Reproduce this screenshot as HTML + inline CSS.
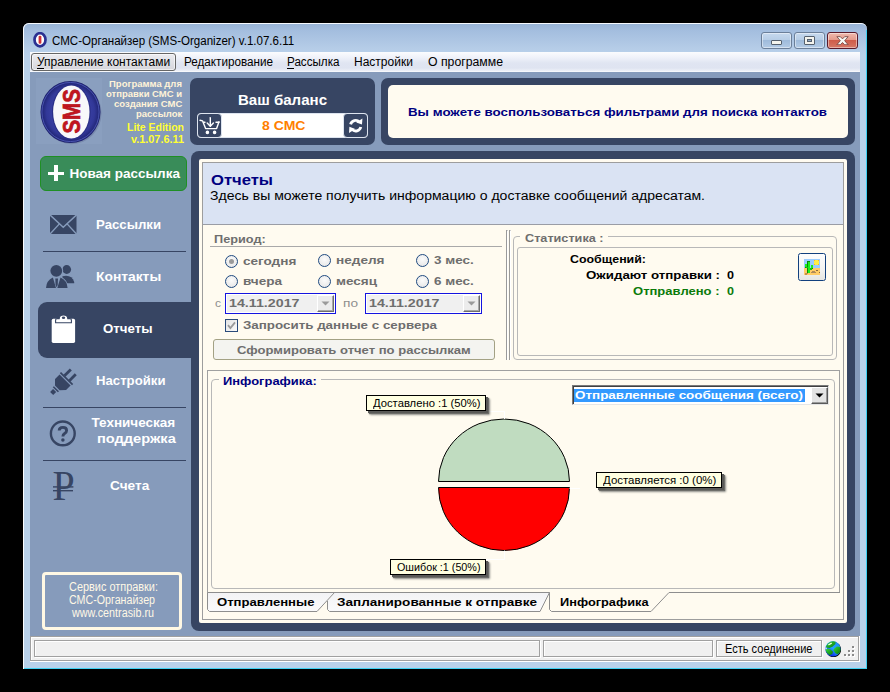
<!DOCTYPE html>
<html><head><meta charset="utf-8"><title>SMS-Organizer</title>
<style>
html,body{margin:0;padding:0;}
body{width:890px;height:692px;background:#000;position:relative;overflow:hidden;font-family:"Liberation Sans",sans-serif;}
body div,body svg{position:absolute;box-sizing:border-box;}
.t{position:absolute;white-space:nowrap;line-height:1;transform-origin:0 0;display:block;}
</style></head><body>
<div style="left:23px;top:23px;width:844px;height:646px;border-radius:6px 6px 0 0;background:linear-gradient(#97b3d5 0px,#a4bedf 8px,#b6cde8 26px,#b9d1ea 32px,#b9d1ea 100%);"></div>
<div style="left:866px;top:30px;width:1px;height:639px;background:#3fd0f2;"></div>
<div style="left:23px;top:668px;width:844px;height:1px;background:#3fd0f2;"></div>
<div style="left:23px;top:23px;width:844px;height:646px;border-radius:6px 6px 0 0;border-top:1px solid #f6f9fd;border-left:1px solid #fbfdff;background:none;"></div>
<svg style="left:33px;top:32px" width="14" height="15.5" viewBox="0 0 14 16" preserveAspectRatio="none"><ellipse cx="7" cy="8" rx="5.5" ry="6.8" fill="#fff" stroke="#2b3192" stroke-width="2.7"/><rect x="5.6" y="3.8" width="2.8" height="8.4" rx="1.2" fill="#d03038"/></svg>
<span class="t" style="left:52.30px;top:34px;line-height:14px;font-size:12px;color:#000;transform:scaleX(0.9624);">СМС-Органайзер (SMS-Organizer) v.1.07.6.11</span>
<div style="left:761px;top:32px;width:31px;height:17px;border:1px solid #6b7f99;border-radius:3px;background:linear-gradient(#c6d9ee 0%,#b7cde6 45%,#9fbbdb 50%,#b3cbe6 100%);box-shadow:inset 0 0 0 1px rgba(255,255,255,.45);"></div>
<div style="left:794px;top:32px;width:31px;height:17px;border:1px solid #6b7f99;border-radius:3px;background:linear-gradient(#c6d9ee 0%,#b7cde6 45%,#9fbbdb 50%,#b3cbe6 100%);box-shadow:inset 0 0 0 1px rgba(255,255,255,.45);"></div>
<div style="left:827px;top:32px;width:31px;height:17px;border:1px solid #5a1a2a;border-radius:3px;background:linear-gradient(#f0b9ad 0%,#e49b8c 45%,#cf5c4a 50%,#d67866 100%);box-shadow:inset 0 0 0 1px rgba(255,255,255,.45);"></div>
<div style="left:771px;top:40px;width:11px;height:5px;background:#f4f4ee;border:1px solid #55606e;border-radius:1px;"></div>
<div style="left:804px;top:36px;width:11px;height:9px;background:#f4f4ee;border:1px solid #55606e;border-radius:1px;"></div>
<div style="left:807px;top:39px;width:5px;height:3px;background:#8fa9c8;border:1px solid #55606e;"></div>
<svg style="left:836px;top:36px" width="13" height="9.4" viewBox="0 0 15 11" preserveAspectRatio="none"><path d="M1 0.8 L5 0.8 L7.5 3.4 L10 0.8 L14 0.8 L10 5.5 L14 10.2 L10 10.2 L7.5 7.6 L5 10.2 L1 10.2 L5 5.5 Z" fill="#f8f8f4" stroke="#6a3a38" stroke-width="0.9" stroke-linejoin="round"/></svg>
<div style="left:30px;top:52px;width:830px;height:20px;background:linear-gradient(#fbfcfe 0%,#eef1f9 30%,#e0e5f2 55%,#dfe4f1 80%,#eef1f8 95%,#ffffff 100%);"></div>
<div style="left:31px;top:53px;width:145px;height:18px;border:1px solid #666;border-radius:3px;background:linear-gradient(#ececf0,#d6d6dc);box-shadow:inset 0 0 0 1px rgba(255,255,255,.6);"></div>
<span class="t" style="left:37.00px;top:55px;line-height:14px;font-size:12px;color:#000;">Управление контактами</span>
<div style="left:37px;top:68px;width:7px;height:1px;background:#000;"></div>
<span class="t" style="left:184.00px;top:55px;line-height:14px;font-size:12px;color:#000;transform:scaleX(0.9736);">Редактирование</span>
<span class="t" style="left:287.00px;top:55px;line-height:14px;font-size:12px;color:#000;transform:scaleX(0.9705);">Рассылка</span>
<div style="left:287px;top:68px;width:7px;height:1px;background:#000;"></div>
<span class="t" style="left:354.00px;top:55px;line-height:14px;font-size:12px;color:#000;">Настройки</span>
<span class="t" style="left:428.00px;top:55px;line-height:14px;font-size:12px;color:#000;transform:scaleX(1.0216);">О программе</span>
<div style="left:30px;top:72px;width:830px;height:565px;background:#869bbb;"></div>
<div style="left:36px;top:78px;width:66px;height:66px;background:#8a9fbf;"></div>
<svg style="left:36px;top:78px" width="67" height="67" viewBox="0 0 67 67">
<defs><radialGradient id="lg" cx="50%" cy="50%" r="50%"><stop offset="0.5" stop-color="#3c43a8"/><stop offset="0.8" stop-color="#323898"/><stop offset="1" stop-color="#1c206c"/></radialGradient></defs>
<ellipse cx="35.6" cy="35.2" rx="30" ry="31" fill="#6c7ca0" opacity=".6"/>
<ellipse cx="34.5" cy="34" rx="30" ry="31" fill="url(#lg)"/>
<ellipse cx="34.5" cy="34" rx="28.6" ry="29.6" fill="none" stroke="#5a66c8" stroke-width="1" opacity=".7"/>
<ellipse cx="35.3" cy="34" rx="19.4" ry="27.6" fill="#2a2f86"/>
<ellipse cx="35.3" cy="34" rx="18.2" ry="26.5" fill="#f8f8fa"/>
<text x="0" y="0" transform="translate(43.8,55.6) rotate(-90)" font-family="Liberation Sans" font-weight="bold" font-size="23.5" fill="#c4151f" stroke="#b01019" stroke-width="0.7" textLength="44.5" lengthAdjust="spacingAndGlyphs">SMS</text>
</svg>
<span class="t" style="left:109.47px;top:80px;line-height:9px;font-size:8.2px;color:#fff3d8;font-weight:bold;transform:scaleX(1.1600);">Программа для</span>
<span class="t" style="left:106.30px;top:90px;line-height:9px;font-size:8.2px;color:#fff3d8;font-weight:bold;transform:scaleX(1.1600);">отправки СМС и</span>
<span class="t" style="left:114.15px;top:100px;line-height:9px;font-size:8.2px;color:#fff3d8;font-weight:bold;transform:scaleX(1.1600);">создания СМС</span>
<span class="t" style="left:136.21px;top:110px;line-height:9px;font-size:8.2px;color:#fff3d8;font-weight:bold;transform:scaleX(1.1600);">рассылок</span>
<span class="t" style="left:126.75px;top:122px;line-height:11px;font-size:10px;color:#ffff33;font-weight:bold;transform:scaleX(1.0470);">Lite Edition</span>
<span class="t" style="left:130.75px;top:134px;line-height:11px;font-size:10px;color:#ffff33;font-weight:bold;transform:scaleX(1.0872);">v.1.07.6.11</span>
<div style="left:190px;top:78px;width:185px;height:67px;background:#374563;border-radius:7px;"></div>
<span class="t" style="left:238.00px;top:92px;line-height:16px;font-size:14.5px;color:#fff;font-weight:bold;transform:scaleX(1.0377);">Ваш баланс</span>
<div style="left:197px;top:113px;width:171px;height:25px;background:#fff;border-radius:4px;border:1px solid #dde4ef;"></div>
<div style="left:197px;top:113px;width:25px;height:25px;background:#374563;border-radius:4px;border:1px solid #dde4ef;"></div>
<div style="left:343px;top:113px;width:25px;height:25px;background:#374563;border-radius:4px;border:1px solid #dde4ef;"></div>
<svg style="left:197px;top:113px" width="25" height="25" viewBox="0 0 25 25" fill="none" stroke="#fff" stroke-width="1.4" stroke-linecap="round" stroke-linejoin="round">
<path d="M3 7.3 L5.6 7.9 L8.6 15.6 L19.6 15.6 L22 8.8"/><path d="M6.6 9.2 L8 9.2 M19 9.2 L22 9.2"/>
<path d="M13.3 4.6 L13.3 13"/><path d="M10.2 10 L13.3 13.2 L16.4 10"/>
<circle cx="10.4" cy="19.4" r="1.1" fill="#fff"/><circle cx="17.6" cy="19.4" r="1.1" fill="#fff"/></svg>
<svg style="left:343px;top:113px" width="25" height="25" viewBox="0 0 25 25" fill="none" stroke="#fff" stroke-width="2.8">
<path d="M7.6 11.4 A5.2 5.2 0 0 1 16.4 9"/><path d="M17.8 14 A5.2 5.2 0 0 1 9 16.4"/>
<path d="M19.4 5.4 L19 11.6 L13.2 9.4 Z" fill="#fff" stroke="none"/><path d="M6 20 L6.4 13.8 L12.2 16 Z" fill="#fff" stroke="none"/></svg>
<span class="t" style="left:261.50px;top:118px;line-height:15px;font-size:13px;color:#ff8000;font-weight:bold;transform:scaleX(1.0800);">8 СМС</span>
<div style="left:381px;top:78px;width:474px;height:67px;background:#374563;border-radius:7px;"></div>
<div style="left:388px;top:85px;width:460px;height:53px;background:#fffbf0;border-radius:5px;"></div>
<span class="t" style="left:408.00px;top:106px;line-height:12px;font-size:11.5px;color:#000080;font-weight:bold;transform:scaleX(1.1588);">Вы можете воспользоваться фильтрами для поиска контактов</span>
<div style="left:40px;top:156px;width:147px;height:35px;background:#398c59;border:1px solid #1f8f24;border-radius:6px;"></div>
<div style="left:48px;top:171.5px;width:16px;height:3.5px;background:#fff;"></div>
<div style="left:54.3px;top:165px;width:3.5px;height:16.3px;background:#fff;"></div>
<span class="t" style="left:69.50px;top:166px;line-height:15px;font-size:13.5px;color:#fff;font-weight:bold;">Новая рассылка</span>
<svg style="left:50px;top:215px" width="26.5" height="19" viewBox="0 0 26.5 19"><rect x="0" y="0" width="26.5" height="19" fill="#374563"/>
<path d="M-0.5 -0.5 L13.25 12.2 L27 -0.5" fill="none" stroke="#869bbb" stroke-width="1.5"/><path d="M-0.5 19.6 L9.6 8.6 M27 19.6 L16.9 8.6" fill="none" stroke="#869bbb" stroke-width="1.4"/></svg>
<span class="t" style="left:96.00px;top:217px;line-height:15px;font-size:13.5px;color:#fff;font-weight:bold;transform:scaleX(0.9773);">Рассылки</span>
<div style="left:43px;top:251px;width:143px;height:1px;background:#374563;"></div>
<svg style="left:45px;top:264px" width="30" height="25" viewBox="0 0 30 25" fill="#374563">
<circle cx="21.7" cy="5.5" r="4.4"/><path d="M17.4 12.2 Q26.6 10 29.2 18 L29.2 19.3 L18 19.3 Z"/>
<circle cx="11.3" cy="6.8" r="6.9" fill="#869bbb"/><circle cx="11.3" cy="6.8" r="5.9"/>
<path d="M22.6 24.6 Q22.2 16.6 15.5 13.6 L12.3 24.6 Z" fill="#869bbb" stroke="#869bbb" stroke-width="2"/>
<path d="M1 24 Q1.4 16.6 7.9 13.6 L11 24 Z"/><path d="M22.6 24 Q22.2 16.6 15.5 13.6 L12.3 24 Z"/>
<path d="M10.3 14.4 L13 14.4 L12.7 21 L11.65 23.2 L10.6 21 Z"/></svg>
<span class="t" style="left:95.50px;top:269px;line-height:15px;font-size:13.5px;color:#fff;font-weight:bold;transform:scaleX(1.0242);">Контакты</span>
<div style="left:38px;top:302px;width:162px;height:56px;background:#374563;border-radius:9px 0 0 9px;"></div>
<svg style="left:51px;top:314px" width="25" height="30" viewBox="0 0 25 30">
<rect x="0.7" y="4.8" width="23.4" height="24.1" rx="1.6" fill="#fff"/>
<path d="M4.6 8.8 L4.6 6 Q4.6 4.6 6 4.6 L8.2 4.6 Q8.4 0.9 12.5 0.9 Q16.6 0.9 16.8 4.6 L19 4.6 Q20.4 4.6 20.4 6 L20.4 8.8 Z" fill="#fff" stroke="#374563" stroke-width="1.1"/>
<ellipse cx="12.5" cy="3.8" rx="1.7" ry="1.2" fill="#374563"/></svg>
<span class="t" style="left:103.00px;top:321px;line-height:15px;font-size:13.5px;color:#fff;font-weight:bold;transform:scaleX(0.9817);">Отчеты</span>
<svg style="left:45px;top:362px" width="36" height="36" viewBox="45 362 36 36" fill="#374563">
<g transform="translate(66.5 378.65) rotate(45)"><rect x="-4.9" y="-9.6" width="2.8" height="9"/><rect x="2.1" y="-9.6" width="2.8" height="9"/>
<rect x="-8.6" y="-0.9" width="17.2" height="1.7"/>
<path d="M-7.8 2 L7.8 2 L7.8 8.4 L3.3 13 L-3.3 13 L-7.8 8.4 Z"/>
<rect x="-3.6" y="14.2" width="7.2" height="1.6"/><rect x="-2.2" y="16.8" width="4.4" height="4.2"/></g></svg>
<span class="t" style="left:95.50px;top:373px;line-height:15px;font-size:13.5px;color:#fff;font-weight:bold;transform:scaleX(0.9758);">Настройки</span>
<div style="left:43px;top:407px;width:143px;height:1px;background:#374563;"></div>
<svg style="left:49px;top:420px" width="28" height="27" viewBox="0 0 28 27"><circle cx="13.8" cy="13.4" r="11.9" fill="none" stroke="#374563" stroke-width="2.4"/>
<path d="M10.2 10.6 Q10.2 7.4 13.9 7.4 Q17.6 7.4 17.6 10.4 Q17.6 12.2 15.6 13.4 Q13.9 14.4 13.9 16.6" fill="none" stroke="#374563" stroke-width="2.9"/><circle cx="13.9" cy="19.9" r="1.75" fill="#374563"/></svg>
<span class="t" style="left:91.50px;top:415px;line-height:15px;font-size:13.5px;color:#fff;font-weight:bold;">Техническая</span>
<span class="t" style="left:96.50px;top:431px;line-height:15px;font-size:13.5px;color:#fff;font-weight:bold;transform:scaleX(1.0828);">поддержка</span>
<div style="left:43px;top:460px;width:143px;height:1px;background:#374563;"></div>
<svg style="left:50px;top:466px" width="30" height="38" viewBox="0 0 30 38" fill="#374563">
<text x="2.4" y="34" font-family="Liberation Serif" font-size="42" textLength="22.2" lengthAdjust="spacingAndGlyphs">P</text>
<rect x="3" y="20.2" width="20.4" height="1.4"/><rect x="3" y="24" width="20" height="1.4"/></svg>
<span class="t" style="left:110.30px;top:478px;line-height:15px;font-size:13.5px;color:#fff;font-weight:bold;transform:scaleX(1.0088);">Счета</span>
<div style="left:42px;top:572px;width:140px;height:58px;border:3px solid #fff8e4;border-radius:4px;"></div>
<span class="t" style="left:68.50px;top:580px;line-height:14px;font-size:12px;color:#fff8e6;transform:scaleX(0.9096);">Сервис отправки:</span>
<span class="t" style="left:69.00px;top:593px;line-height:14px;font-size:12px;color:#fff8e6;transform:scaleX(0.8893);">СМС-Органайзер</span>
<span class="t" style="left:71.50px;top:606px;line-height:14px;font-size:12px;color:#fff8e6;transform:scaleX(0.8975);">www.centrasib.ru</span>
<div style="left:191px;top:151px;width:664px;height:480px;background:#374563;border-radius:8px;"></div>
<div style="left:199px;top:159px;width:648px;height:464px;background:#fffbf0;border-radius:2px;"></div>
<div style="left:202px;top:162px;width:642px;height:458px;background:#fffbf0;border:1px solid #9d9d9d;"></div>
<div style="left:203px;top:163px;width:640px;height:62px;background:#dae3f3;border-bottom:1px solid #9a9da5;"></div>
<span class="t" style="left:210.50px;top:171px;line-height:17px;font-size:15px;color:#000080;font-weight:bold;transform:scaleX(1.1067);">Отчеты</span>
<span class="t" style="left:210.00px;top:189px;line-height:14px;font-size:12.5px;color:#000;transform:scaleX(1.1226);">Здесь вы можете получить информацию о доставке сообщений адресатам.</span>
<span class="t" style="left:213.75px;top:233px;line-height:12px;font-size:11.5px;color:#6e6e6e;font-weight:bold;transform:scaleX(1.1068);">Период:</span>
<div style="left:210px;top:246px;width:292px;height:1px;background:#a9a9a9;"></div>
<div style="left:225px;top:255px;width:13px;height:13px;border-radius:50%;border:1.6px solid #1f4a80;background:radial-gradient(circle at 50% 40%,#fbfbfb,#e3e3e3);"></div>
<div style="left:229px;top:259px;width:5px;height:5px;border-radius:50%;background:#9a9a9a;"></div>
<div style="left:225px;top:275px;width:13px;height:13px;border-radius:50%;border:1.6px solid #1f4a80;background:radial-gradient(circle at 50% 40%,#fbfbfb,#e3e3e3);"></div>
<div style="left:318px;top:254px;width:13px;height:13px;border-radius:50%;border:1.6px solid #1f4a80;background:radial-gradient(circle at 50% 40%,#fbfbfb,#e3e3e3);"></div>
<div style="left:318px;top:275px;width:13px;height:13px;border-radius:50%;border:1.6px solid #1f4a80;background:radial-gradient(circle at 50% 40%,#fbfbfb,#e3e3e3);"></div>
<div style="left:416px;top:254px;width:13px;height:13px;border-radius:50%;border:1.6px solid #1f4a80;background:radial-gradient(circle at 50% 40%,#fbfbfb,#e3e3e3);"></div>
<div style="left:416px;top:275px;width:13px;height:13px;border-radius:50%;border:1.6px solid #1f4a80;background:radial-gradient(circle at 50% 40%,#fbfbfb,#e3e3e3);"></div>
<span class="t" style="left:243.20px;top:255px;line-height:12px;font-size:11.5px;color:#6e6e6e;font-weight:bold;transform:scaleX(1.1777);">сегодня</span>
<span class="t" style="left:243.20px;top:275px;line-height:12px;font-size:11.5px;color:#6e6e6e;font-weight:bold;transform:scaleX(1.1804);">вчера</span>
<span class="t" style="left:336.00px;top:254px;line-height:12px;font-size:11.5px;color:#6e6e6e;font-weight:bold;transform:scaleX(1.1814);">неделя</span>
<span class="t" style="left:336.00px;top:275px;line-height:12px;font-size:11.5px;color:#6e6e6e;font-weight:bold;transform:scaleX(1.1739);">месяц</span>
<span class="t" style="left:434.00px;top:254px;line-height:12px;font-size:11.5px;color:#6e6e6e;font-weight:bold;transform:scaleX(1.1714);">3 мес.</span>
<span class="t" style="left:434.00px;top:275px;line-height:12px;font-size:11.5px;color:#6e6e6e;font-weight:bold;transform:scaleX(1.1714);">6 мес.</span>
<div style="left:225px;top:293px;width:111px;height:21px;border:1px solid #1414e0;background:#f0f0f0;box-shadow:inset 0 0 0 1px #fff;"></div>
<div style="left:317px;top:295px;width:17px;height:17px;background:#ececec;border:1px solid;border-color:#fff #6e6e6e #6e6e6e #fff;box-shadow:inset -1px -1px 0 #a8a8a8;"></div>
<svg style="left:321px;top:301px" width="9" height="5" viewBox="0 0 9 5"><path d="M0.5 0.5 L8.5 0.5 L4.5 4.5 Z" fill="#9a9a9a"/></svg>
<div style="left:365px;top:293px;width:117px;height:21px;border:1px solid #1414e0;background:#f0f0f0;box-shadow:inset 0 0 0 1px #fff;"></div>
<div style="left:463px;top:295px;width:17px;height:17px;background:#ececec;border:1px solid;border-color:#fff #6e6e6e #6e6e6e #fff;box-shadow:inset -1px -1px 0 #a8a8a8;"></div>
<svg style="left:467px;top:301px" width="9" height="5" viewBox="0 0 9 5"><path d="M0.5 0.5 L8.5 0.5 L4.5 4.5 Z" fill="#9a9a9a"/></svg>
<span class="t" style="left:215.00px;top:297px;line-height:12px;font-size:11.5px;color:#8e8e8e;transform:scaleX(1.0435);">с</span>
<span class="t" style="left:343.00px;top:297px;line-height:12px;font-size:11.5px;color:#8e8e8e;transform:scaleX(1.1883);">по</span>
<span class="t" style="left:228.75px;top:297px;line-height:12px;font-size:11.5px;color:#6e6e6e;font-weight:bold;transform:scaleX(1.2385);">14.11.2017</span>
<span class="t" style="left:368.75px;top:297px;line-height:12px;font-size:11.5px;color:#6e6e6e;font-weight:bold;transform:scaleX(1.2385);">14.11.2017</span>
<div style="left:225px;top:319px;width:13px;height:13px;border:1px solid #2a4a7a;background:linear-gradient(135deg,#e4e4e4,#fafafa);"></div>
<svg style="left:226px;top:320px" width="11" height="11" viewBox="0 0 11 11"><path d="M2 5.2 L4.4 8 L9 2.4" fill="none" stroke="#9a9a9a" stroke-width="1.8"/></svg>
<span class="t" style="left:243.00px;top:319px;line-height:12px;font-size:11.5px;color:#6e6e6e;font-weight:bold;transform:scaleX(1.1620);">Запросить данные с сервера</span>
<div style="left:213px;top:339px;width:282px;height:21px;border:1px solid #a3a184;border-radius:3px;background:#f4f4f0;"></div>
<span class="t" style="left:237.00px;top:344px;line-height:12px;font-size:11.5px;color:#6e6e6e;font-weight:bold;transform:scaleX(1.1343);">Сформировать отчет по рассылкам</span>
<div style="left:506px;top:230px;width:2px;height:130px;border-left:1px solid #9a9a9a;border-right:1px solid #fff;border-top:1px solid #9a9a9a;"></div>
<div style="left:509px;top:230px;width:2px;height:130px;border-left:1px solid #9a9a9a;border-right:1px solid #fff;border-top:1px solid #9a9a9a;"></div>
<div style="left:513px;top:236px;width:324px;height:124px;border:1px solid #b8b8b8;border-radius:4px;"></div>
<div style="left:520px;top:232px;width:88px;height:14px;background:#fffbf0;"></div>
<span class="t" style="left:525.00px;top:232px;line-height:12px;font-size:11.5px;color:#6e6e6e;font-weight:bold;transform:scaleX(1.1009);">Статистика :</span>
<div style="left:517px;top:247px;width:316px;height:109px;border:1px solid #b8b8b8;border-radius:3px;"></div>
<span class="t" style="left:569.50px;top:253px;line-height:12px;font-size:11.5px;color:#000;font-weight:bold;transform:scaleX(1.0785);">Сообщений:</span>
<span class="t" style="left:585.50px;top:269px;line-height:12px;font-size:11.5px;color:#000;font-weight:bold;transform:scaleX(1.1564);">Ожидают отправки :</span>
<span class="t" style="left:726.75px;top:269px;line-height:12px;font-size:11.5px;color:#000;font-weight:bold;transform:scaleX(1.0945);">0</span>
<span class="t" style="left:633.00px;top:285px;line-height:12px;font-size:11.5px;color:#0a7a0a;font-weight:bold;transform:scaleX(1.1321);">Отправлено :</span>
<span class="t" style="left:726.75px;top:285px;line-height:12px;font-size:11.5px;color:#0a7a0a;font-weight:bold;transform:scaleX(1.0945);">0</span>
<div style="left:798px;top:253px;width:28px;height:28px;border:1.4px solid #12407e;border-radius:2.5px;background:linear-gradient(#fdfdfd,#f3f3f1 60%,#e6e6e2);"></div>
<svg style="left:804px;top:259px" width="16" height="16" viewBox="0 0 16 16" shape-rendering="crispEdges">
<rect width="16" height="9" fill="#99ccff"/><rect y="9" width="16" height="7" fill="#ffcc66"/>
<rect x="10" y="1" width="5" height="5" fill="#ffb81a"/><rect x="11" y="1" width="3" height="5" fill="#ffee44"/><rect x="10" y="2" width="5" height="3" fill="#ffee44"/>
<rect x="3" y="2" width="3.4" height="12" fill="#0a8a0a"/><rect x="3.6" y="2.6" width="2" height="11" fill="#1cf01c"/>
<rect x="1" y="4.6" width="2" height="4.6" fill="#0a8a0a"/><rect x="1.4" y="5" width="1.2" height="3.4" fill="#1cf01c"/><rect x="1.6" y="8" width="2" height="1.4" fill="#12c012"/>
<rect x="7" y="6" width="2" height="4" fill="#0a8a0a"/><rect x="7.4" y="6.4" width="1.2" height="3" fill="#1cf01c"/><rect x="6" y="9" width="2.4" height="1.6" fill="#12c012"/>
<rect x="8" y="12" width="3" height="1" fill="#b08a5a"/><rect x="7" y="13" width="5" height="1" fill="#b08a5a"/><rect x="12" y="11" width="2" height="1" fill="#8a6a40"/><rect x="15" y="13" width="1" height="1" fill="#8a6a40"/>
<rect x="1" y="14" width="3" height="1" fill="#c09050"/><rect x="0.6" y="15" width="2" height="1" fill="#c09050"/>
</svg>
<div style="left:207px;top:370px;width:633px;height:223px;border:1px solid #a0a0a0;border-bottom:none;"></div>
<div style="left:211px;top:379px;width:624px;height:210px;border:1px solid #b8b8b8;border-radius:4px;"></div>
<div style="left:219px;top:374px;width:102px;height:14px;background:#fffbf0;"></div>
<span class="t" style="left:222.75px;top:375px;line-height:12px;font-size:11.5px;color:#000080;font-weight:bold;transform:scaleX(1.1232);">Инфографика:</span>
<div style="left:572px;top:385px;width:257px;height:20px;border:1px solid;border-color:#7a7a7a #e6e6e6 #e6e6e6 #7a7a7a;background:#fff;box-shadow:inset 1px 1px 0 #404040;"></div>
<div style="left:574px;top:389px;width:231px;height:13px;background:#3399ff;"></div>
<span class="t" style="left:575.00px;top:389px;line-height:12px;font-size:11.5px;color:#fff;font-weight:bold;transform:scaleX(1.1682);">Отправленные сообщения (всего)</span>
<div style="left:811px;top:387px;width:17px;height:17px;background:#e4e4e4;border:1px solid;border-color:#fff #5a5a5a #5a5a5a #fff;box-shadow:inset -1px -1px 0 #9a9a9a;"></div>
<svg style="left:815px;top:393px" width="9" height="5" viewBox="0 0 9 5"><path d="M0.5 0.5 L8.5 0.5 L4.5 4.5 Z" fill="#000"/></svg>
<svg style="left:430px;top:405px" width="150" height="160" viewBox="430 405 150 160">
<path d="M438.5 481.5 A65.5 62.5 0 0 1 569.5 481.5 Z" fill="#c0dcc0" stroke="#000" stroke-width="1"/>
<path d="M438.5 487.5 A65.5 63 0 0 0 569.5 487.5 Z" fill="#ff0000" stroke="#000" stroke-width="1"/>
<path d="M485.5 411.5 L504.5 411.5 L504.5 419" fill="none" stroke="#fff" stroke-width="1"/>
<path d="M569.5 488.5 L596 488.5" fill="none" stroke="#fff" stroke-width="1"/>
<path d="M504.5 550.5 L504.5 559.5 L486 559.5" fill="none" stroke="#fff" stroke-width="1"/>
</svg>
<div style="left:366px;top:395px;width:120px;height:16px;background:#ffffe1;border:1px solid #000;box-shadow:2px 2px 0 #5a5a58,3px 3px 1px #6e6e6a,4px 4px 2px #9a9a94;"></div>
<span class="t" style="left:373.00px;top:397px;line-height:12px;font-size:11.5px;color:#000;transform:scaleX(0.9777);">Доставлено :1 (50%)</span>
<div style="left:596px;top:472px;width:126px;height:16px;background:#ffffe1;border:1px solid #000;box-shadow:2px 2px 0 #5a5a58,3px 3px 1px #6e6e6a,4px 4px 2px #9a9a94;"></div>
<span class="t" style="left:603.00px;top:474px;line-height:12px;font-size:11.5px;color:#000;transform:scaleX(0.9954);">Доставляется :0 (0%)</span>
<div style="left:390px;top:559px;width:96px;height:16px;background:#ffffe1;border:1px solid #000;box-shadow:2px 2px 0 #5a5a58,3px 3px 1px #6e6e6a,4px 4px 2px #9a9a94;"></div>
<span class="t" style="left:397.00px;top:561px;line-height:12px;font-size:11.5px;color:#000;transform:scaleX(0.9354);">Ошибок :1 (50%)</span>
<svg style="left:200px;top:590px" width="645" height="24" viewBox="200 590 645 24" fill="none">
<defs><linearGradient id="tg" x1="0" y1="0" x2="0" y2="1"><stop offset="0" stop-color="#f3f3f5"/><stop offset="1" stop-color="#fafafb"/></linearGradient></defs>
<path d="M207.5 592.5 L207.5 609.5 L209.5 611.5 L317 611.5 L334.5 592.5 Z" fill="url(#tg)"/>
<path d="M334.5 592.5 L327.5 601 L327.5 609.5 L329.5 611.5 L540 611.5 L549.5 592.5 Z" fill="url(#tg)"/>
<path d="M207.5 592.5 L207.5 609.5 L209.5 611.5 L317 611.5 L334.5 592.5" stroke="#8e8e8e"/>
<path d="M207.5 592.5 L549.5 592.5" stroke="#8e8e8e"/>
<path d="M327.5 601 L327.5 609.5 L329.5 611.5 L540 611.5 L549.5 592.5" stroke="#8e8e8e"/>
<path d="M549.5 592.5 L549.5 609.5 L551.5 611.5 L651 611.5 L669 592.5 L840 592.5" stroke="#8e8e8e"/>
</svg>
<span class="t" style="left:217.00px;top:596px;line-height:12px;font-size:11.5px;color:#000;font-weight:bold;transform:scaleX(1.1401);">Отправленные</span>
<span class="t" style="left:337.00px;top:596px;line-height:12px;font-size:11.5px;color:#000;font-weight:bold;transform:scaleX(1.1776);">Запланированные к отправке</span>
<span class="t" style="left:559.50px;top:596px;line-height:12px;font-size:11.5px;color:#000;font-weight:bold;transform:scaleX(1.1112);">Инфографика</span>
<div style="left:30px;top:636px;width:830px;height:26px;background:#fff;"></div>
<div style="left:30px;top:636px;width:829px;height:25px;background:#f0f0f0;border:1px solid #a0a0a0;box-shadow:inset 1px 1px 0 #fff;"></div>
<div style="left:34px;top:640px;width:506px;height:17px;border:1px solid #a0a0a0;box-shadow:inset 1px 1px 0 #fff,1px 1px 0 #fff;"></div>
<div style="left:543px;top:640px;width:170px;height:17px;border:1px solid #a0a0a0;box-shadow:inset 1px 1px 0 #fff,1px 1px 0 #fff;"></div>
<div style="left:716px;top:640px;width:106px;height:17px;border:1px solid #a0a0a0;box-shadow:inset 1px 1px 0 #fff,1px 1px 0 #fff;"></div>
<span class="t" style="left:725.00px;top:642px;line-height:14px;font-size:12px;color:#000;transform:scaleX(0.9193);">Есть соединение</span>
<svg style="left:825px;top:641px" width="16" height="16" viewBox="0 0 16 16">
<defs><linearGradient id="oc" x1="1" y1="0" x2="0.3" y2="1"><stop offset="0" stop-color="#1f86f6"/><stop offset="0.55" stop-color="#22a4ff"/><stop offset="0.8" stop-color="#1450f0"/><stop offset="1" stop-color="#0618e8"/></linearGradient>
<linearGradient id="gr" x1="0" y1="0" x2="1" y2="1"><stop offset="0" stop-color="#35d83a"/><stop offset="1" stop-color="#0a7a0c"/></linearGradient></defs>
<circle cx="8.5" cy="8.6" r="7.6" fill="#060606"/>
<circle cx="7.9" cy="7.9" r="7.6" fill="url(#oc)"/>
<path d="M1 5.4 Q2.4 2.4 5.6 0.8 Q8 -0.1 10.6 0.7 L10.4 3 L7.4 5.8 L4.4 7 L1.2 6.6 Z" fill="url(#gr)"/>
<path d="M3 3.6 L6.2 1.6 L7.2 2.4 L3.8 4.6 Z" fill="#eaffea"/>
<path d="M8.8 8 L11.8 5.6 L14.8 5.8 Q16 8.6 14.8 11.6 L12.4 13.2 L10.2 12 L8.6 9.6 Z" fill="url(#gr)"/>
<path d="M0.4 8.8 L2.4 7.8 L5.2 8.2 L8 10.8 L7.2 13 L4.6 14.2 Q1.2 12.2 0.4 8.8 Z" fill="url(#gr)"/>
<path d="M0.4 7 L1.6 6.4 L2 8 L0.5 8.6 Z" fill="#bfeaff"/>
</svg>
<div style="left:852px;top:654px;width:2px;height:2px;background:#8a8a8a;box-shadow:1px 1px 0 #fff;"></div>
<div style="left:848px;top:654px;width:2px;height:2px;background:#8a8a8a;box-shadow:1px 1px 0 #fff;"></div>
<div style="left:844px;top:654px;width:2px;height:2px;background:#8a8a8a;box-shadow:1px 1px 0 #fff;"></div>
<div style="left:852px;top:650px;width:2px;height:2px;background:#8a8a8a;box-shadow:1px 1px 0 #fff;"></div>
<div style="left:848px;top:650px;width:2px;height:2px;background:#8a8a8a;box-shadow:1px 1px 0 #fff;"></div>
<div style="left:852px;top:646px;width:2px;height:2px;background:#8a8a8a;box-shadow:1px 1px 0 #fff;"></div>
</body></html>
